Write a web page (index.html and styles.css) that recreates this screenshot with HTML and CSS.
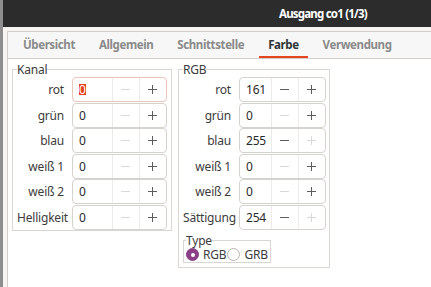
FILE: index.html
```html
<!DOCTYPE html>
<html lang="de">

<head>
    <meta charset="UTF-8">
    <link rel="stylesheet" href="styles.css">
</head>

<body>
    <div class="window">
        <div class="titlebar">Ausgang co1 (1/3)</div>

        <div class="notebook">
            <div class="tabs">
                <div class="tab">Übersicht</div>
                <div class="tab">Allgemein</div>
                <div class="tab">Schnittstelle</div>
                <div class="tab active">Farbe</div>
                <div class="tab">Verwendung</div>
            </div>

            <div class="page">
                <fieldset class="frame frame-kanal">
                    <legend>Kanal</legend>
                    <div class="rows">
                        <label>rot</label>
                        <div class="spin focused">
                            <div class="entry"><span class="selected">0</span></div>
                            <div class="btn minus off"></div>
                            <div class="btn plus"></div>
                        </div>
                        <label>grün</label>
                        <div class="spin">
                            <div class="entry">0</div>
                            <div class="btn minus off"></div>
                            <div class="btn plus"></div>
                        </div>
                        <label>blau</label>
                        <div class="spin">
                            <div class="entry">0</div>
                            <div class="btn minus off"></div>
                            <div class="btn plus"></div>
                        </div>
                        <label>weiß 1</label>
                        <div class="spin">
                            <div class="entry">0</div>
                            <div class="btn minus off"></div>
                            <div class="btn plus"></div>
                        </div>
                        <label>weiß 2</label>
                        <div class="spin">
                            <div class="entry">0</div>
                            <div class="btn minus off"></div>
                            <div class="btn plus"></div>
                        </div>
                        <label>Helligkeit</label>
                        <div class="spin">
                            <div class="entry">0</div>
                            <div class="btn minus off"></div>
                            <div class="btn plus"></div>
                        </div>
                    </div>
                </fieldset>

                <fieldset class="frame frame-rgb">
                    <legend>RGB</legend>
                    <div class="rows">
                        <label>rot</label>
                        <div class="spin">
                            <div class="entry">161</div>
                            <div class="btn minus"></div>
                            <div class="btn plus"></div>
                        </div>
                        <label>grün</label>
                        <div class="spin">
                            <div class="entry">0</div>
                            <div class="btn minus off"></div>
                            <div class="btn plus"></div>
                        </div>
                        <label>blau</label>
                        <div class="spin">
                            <div class="entry">255</div>
                            <div class="btn minus"></div>
                            <div class="btn plus off"></div>
                        </div>
                        <label>weiß 1</label>
                        <div class="spin">
                            <div class="entry">0</div>
                            <div class="btn minus off"></div>
                            <div class="btn plus"></div>
                        </div>
                        <label>weiß 2</label>
                        <div class="spin">
                            <div class="entry">0</div>
                            <div class="btn minus off"></div>
                            <div class="btn plus"></div>
                        </div>
                        <label>Sättigung</label>
                        <div class="spin">
                            <div class="entry">254</div>
                            <div class="btn minus"></div>
                            <div class="btn plus off"></div>
                        </div>
                    </div>

                    <fieldset class="frame frame-type">
                        <legend>Type</legend>
                        <div class="radios">
                            <span class="radio checked"></span><span class="radio-label">RGB</span>
                            <span class="radio"></span><span class="radio-label">GRB</span>
                        </div>
                    </fieldset>
                </fieldset>
            </div>
        </div>
    </div>
</body>

</html>
```

FILE: styles.css
```css
body {
    margin: 0;
    background-color: #8e8e8e;
    font-family: "Noto Sans", "DejaVu Sans", sans-serif;
    font-size: 12px;
    letter-spacing: -0.2px;
    color: #3c3c3c;
    overflow: hidden;
}

.window {
    margin-left: 3px;
    height: 287px;
    background-color: #f6f5f4;
}

.titlebar {
    height: 27px;
    line-height: 27px;
    padding-left: 276px;
    background-color: #2c2c2c;
    color: #fff;
    font-weight: 700;
    font-size: 11.5px;
    letter-spacing: -0.8px;
}

.notebook {
    margin: 4px 0 0 4px;
    height: 256px;
    border: 1px solid #d3cec9;
    border-right: none;
    border-bottom: none;
    background-color: #fff;
}

.tabs {
    display: flex;
    height: 26px;
    padding-left: 3px;
    background-color: #f7f7f7;
    border-bottom: 1px solid #d3cec9;
}

.tab {
    margin: 0 3px;
    padding: 0 9px;
    line-height: 26px;
    font-weight: 700;
    font-size: 11.5px;
    letter-spacing: -0.4px;
    color: #8a8a8a;
}

.tab.active {
    color: #2e3436;
    box-shadow: inset 0 -2px 0 #e6461f;
}

.page {
    display: flex;
    align-items: flex-start;
    gap: 6px;
    padding: 3px 0 0 4px;
}

/* frames */
.frame {
    margin: 0;
    padding: 0 4px 0 4px;
    border: 1px solid #dad6d2;
    min-width: 0;
}

.frame legend {
    padding: 0;
    line-height: 15px;
    color: #3c3c3c;
}

.frame-kanal {
    width: 150px;
}

.frame-rgb {
    width: 143px;
    padding-right: 3px;
    padding-bottom: 4px;
}

.rows {
    display: grid;
    grid-template-columns: 47px 95px;
    grid-auto-rows: 25px;
    row-gap: 0.6px;
    column-gap: 8px;
    align-items: center;
}

.frame-rgb .rows {
    grid-template-columns: 48px 87px;
}

.rows label {
    text-align: right;
    white-space: nowrap;
}

/* spin buttons */
.spin {
    display: flex;
    height: 25px;
    box-sizing: border-box;
    border: 1px solid #d6d2ce;
    border-radius: 4px;
    background: #fff;
}

.spin.focused {
    border-color: #e8c6b8;
}

.entry {
    flex: 1;
    padding-left: 6px;
    line-height: 23px;
    color: #2a2a2a;
}

.selected {
    display: inline-block;
    line-height: 11px;
    background-color: #e5401e;
    color: #fff;
}

.btn {
    position: relative;
    width: 26px;
    border-left: 1px solid #ebebeb;
}

.btn::before,
.btn.plus::after {
    content: "";
    position: absolute;
    left: 8px;
    top: 11px;
    width: 9px;
    height: 1px;
    background: #5c5c5c;
}

.btn.plus::after {
    left: 12px;
    top: 7px;
    width: 1px;
    height: 9px;
}

.btn.off::before,
.btn.off::after {
    background: #d9d9d9;
}

/* type */
.frame-type {
    width: fit-content;
    margin-top: 3px;
    padding: 0 1px 0 2px;
}

.radios {
    display: flex;
    align-items: center;
    height: 14px;
}

.radio {
    width: 11px;
    height: 11px;
    border: 1px solid #b9b5b1;
    border-radius: 50%;
    background: #fff;
    margin-right: 4px;
}

.radio.checked {
    position: relative;
    border-color: #8a3f86;
    background: #8a3f86;
}

.radio.checked::after {
    content: "";
    position: absolute;
    left: 3.5px;
    top: 3.5px;
    width: 4px;
    height: 4px;
    border-radius: 50%;
    background: #fff;
}

.radio-label {
    margin-right: 1px;
}
```
